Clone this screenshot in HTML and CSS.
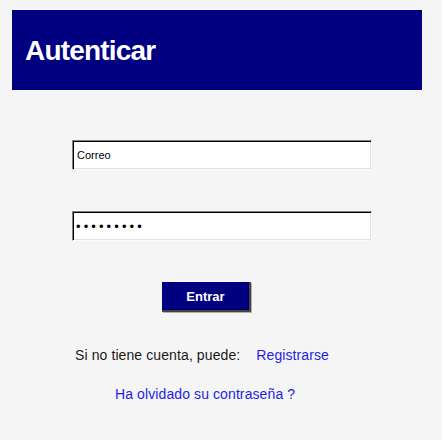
FILE: index.html
```html
<!DOCTYPE html>
<html lang="es">
<head>
<meta charset="utf-8">
<title>Autenticar</title>
<link rel="stylesheet" href="styles.css">
</head>
<body>
<div class="page">
  <div class="header"><h1 class="title">Autenticar</h1></div>
  <form class="form">
    <input class="field" type="text" value="Correo">
    <input class="field pass" type="password" value="123456789">
    <button class="btn" type="button">Entrar</button>
    <p class="line line-reg"><span class="muted">Si no tiene cuenta, puede:</span><a class="link reg" href="#">Registrarse</a></p>
    <p class="line line-forgot"><a class="link" href="#">Ha olvidado su contraseña ?</a></p>
  </form>
</div>
</body>
</html>
```
FILE: styles.css
```css
html { background: #ffffff; }
body { margin: 0; }
.page {
  width: 442px;
  height: 440px;
  background: #f5f5f5;
  padding-top: 10px;
  box-sizing: border-box;
  font-family: "Liberation Sans", Arial, sans-serif;
}
.header {
  margin-left: 12px;
  width: 410px;
  height: 80px;
  background: #000080;
  display: flex;
  align-items: center;
}
.title {
  margin: 0 0 0 13px;
  color: #ffffff;
  font-size: 28px;
  letter-spacing: -0.8px;
  font-weight: bold;
  line-height: 30px;
  position: relative;
  top: 1px;
}
.form {
  display: flex;
  flex-direction: column;
  align-items: flex-start;
  margin: 0;
}
.field {
  margin: 50px 0 0 72px;
  width: 300px;
  height: 30px;
  box-sizing: border-box;
  border: 1px solid;
  border-color: #808080 #fafafa #fafafa #808080;
  box-shadow: inset 1px 1px 0 #000000, inset -1px -1px 0 #e2e2e2;
  background: #ffffff;
  padding: 0 0 0 4px;
  font-family: "Liberation Sans", Arial, sans-serif;
  font-size: 11px;
  color: #000000;
  outline: none;
}
.pass {
  margin-top: 41px;
  font-size: 13px;
  letter-spacing: 3.1px;
  padding-left: 3px;
}
.btn {
  margin: 41px 0 0 162px;
  width: 89px;
  height: 30px;
  box-sizing: border-box;
  background: #000080;
  color: #ffffff;
  font-family: "Liberation Sans", Arial, sans-serif;
  font-size: 13px;
  font-weight: bold;
  border: none;
  border-right: 2px solid #444;
  border-bottom: 2px solid #444;
  box-shadow: inset -1px -1px 0 #000060, 1px 1px 0 #b0b0b0;
  padding: 0;
  cursor: pointer;
}
.line {
  margin: 0;
  font-size: 14px;
  line-height: 16px;
  letter-spacing: 0.1px;
}
.line-reg {
  margin: 35px 0 0 75px;
  display: flex;
  gap: 16px;
}
.line-forgot {
  margin: 23px 0 0 115px;
}
.muted { color: #1a1a1a; }
.link {
  color: #1f1fe6;
  text-decoration: none;
}
```
